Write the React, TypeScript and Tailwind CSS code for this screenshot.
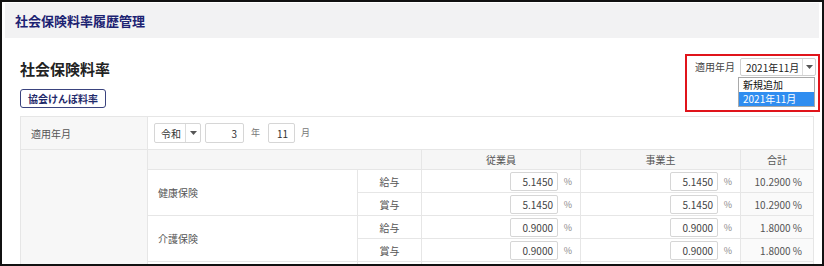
const rows = [
  { name: '健康保険', kind: '給与', emp: '5.1450', own: '5.1450', total: '10.2900 %' },
  { name: '健康保険', kind: '賞与', emp: '5.1450', own: '5.1450', total: '10.2900 %' },
  { name: '介護保険', kind: '給与', emp: '0.9000', own: '0.9000', total: '1.8000 %' },
  { name: '介護保険', kind: '賞与', emp: '0.9000', own: '0.9000', total: '1.8000 %' },
]

function Caret() {
  return (
    <svg width="7" height="4" viewBox="0 0 7 4" className="fill-[#555]">
      <path d="M0 0h7L3.5 4z" />
    </svg>
  )
}

function RateInput({ value }: { value: string }) {
  return (
    <div className="flex items-center justify-end pr-[8px]">
      <div className="w-[48px] h-[19px] border border-[#d6d6d6] rounded-[2px] bg-white flex items-center justify-end pr-[4px] text-[10px] text-[#444]">
        {value}
      </div>
      <span className="w-[14px] text-right text-[9px] leading-[19px] text-[#888]">%</span>
    </div>
  )
}

export default function App() {
  const font = { fontFamily: '"Noto Sans CJK JP", "Liberation Sans", sans-serif' }
  const cell = 'border border-[#e6e6e6] p-0'

  return (
    <div style={font} className="w-[824px] h-[266px] overflow-hidden bg-white border-2 border-[#111]">
      <div className="mx-[3px] mt-[1px] h-[35px] bg-[#f2f2f3] flex items-center pl-[10px]">
        <h1 className="text-[13px] font-bold text-[#1c2272] leading-none">社会保険料率履歴管理</h1>
      </div>

      <div className="pl-[18px] pr-[9px]">
        <div className="flex justify-between items-start pt-[16px]">
          <div>
            <h2 className="mt-[5px] h-[20px] leading-[20px] text-[15px] font-bold text-[#222]">社会保険料率</h2>
            <button className="mt-[10px] h-[19px] px-[7px] border border-[#3a437e] rounded-[3px] text-[10px] font-bold text-[#1f2a6b] leading-none">
              協会けんぽ料率
            </button>
          </div>

          <div className="relative -mr-[7px] w-[135px] h-[58px] border-2 border-[#e0141b] pt-[2px] pl-[8px] flex items-start">
            <span className="mt-[3px] text-[10px] text-[#444] leading-[12px]">適用年月</span>
            <div className="ml-[5px] w-[76px] h-[18px] border border-[#cfcfcf] rounded-[2px] bg-white flex items-center">
              <span className="flex-1 pl-[5px] text-[10px] text-[#222]">2021年11月</span>
              <span className="w-[13px] h-full border-l border-[#dcdcdc] flex items-center justify-center">
                <Caret />
              </span>
            </div>
            <div className="absolute left-[51px] top-[21px] w-[77px] border border-[#a9a9a9] bg-white text-[10px]">
              <div className="h-[14px] leading-[14px] pl-[4px] text-[#111]">新規追加</div>
              <div className="h-[14px] leading-[14px] pl-[4px] bg-[#2f8df0] text-white">2021年11月</div>
            </div>
          </div>
        </div>

        <table className="mt-[4px] border-collapse table-fixed w-[793px] text-[10px] text-[#555]">
          <colgroup>
            <col className="w-[127px]" />
            <col className="w-[210px]" />
            <col className="w-[64px]" />
            <col className="w-[159px]" />
            <col className="w-[160px]" />
            <col className="w-[73px]" />
          </colgroup>
          <tbody>
            <tr className="h-[33px]">
              <td className={`${cell} bg-[#f7f7f7] pl-[10px]`}>適用年月</td>
              <td className={`${cell} pl-[6px]`} colSpan={5}>
                <div className="flex items-center">
                  <div className="w-[47px] h-[20px] border border-[#d6d6d6] rounded-[2px] flex items-center">
                    <span className="flex-1 pl-[6px] text-[#333]">令和</span>
                    <span className="w-[15px] h-full border-l border-[#dcdcdc] flex items-center justify-center">
                      <Caret />
                    </span>
                  </div>
                  <div className="ml-[4px] w-[39px] h-[20px] border border-[#d6d6d6] rounded-[2px] flex items-center justify-end pr-[6px] text-[#333]">
                    3
                  </div>
                  <span className="ml-[7px] text-[9px] text-[#777]">年</span>
                  <div className="ml-[8px] w-[27px] h-[20px] border border-[#d6d6d6] rounded-[2px] flex items-center justify-end pr-[6px] text-[#333]">
                    11
                  </div>
                  <span className="ml-[6px] text-[9px] text-[#777]">月</span>
                </div>
              </td>
            </tr>
            <tr className="h-[20px]">
              <td className={`${cell} bg-[#f7f7f7]`} rowSpan={rows.length + 2}></td>
              <td className={`${cell} bg-[#f6f6f6]`} colSpan={2}></td>
              <td className={`${cell} bg-[#f6f6f6] text-center`}>従業員</td>
              <td className={`${cell} bg-[#f6f6f6] text-center`}>事業主</td>
              <td className={`${cell} bg-[#f6f6f6] text-center`}>合計</td>
            </tr>
            {rows.map((r, i) => (
              <tr key={i} className="h-[23px]">
                {i % 2 === 0 && (
                  <td className={`${cell} pl-[10px]`} rowSpan={2}>
                    {r.name}
                  </td>
                )}
                <td className={`${cell} text-center`}>{r.kind}</td>
                <td className={cell}>
                  <RateInput value={r.emp} />
                </td>
                <td className={cell}>
                  <RateInput value={r.own} />
                </td>
                <td className={`${cell} bg-[#fafafa] text-right pr-[11px]`}>{r.total}</td>
              </tr>
            ))}
            <tr className="h-[23px]">
              <td className={cell}></td>
              <td className={cell}></td>
              <td className={cell}></td>
              <td className={cell}></td>
              <td className={`${cell} bg-[#fafafa]`}></td>
            </tr>
          </tbody>
        </table>
      </div>
    </div>
  )
}
